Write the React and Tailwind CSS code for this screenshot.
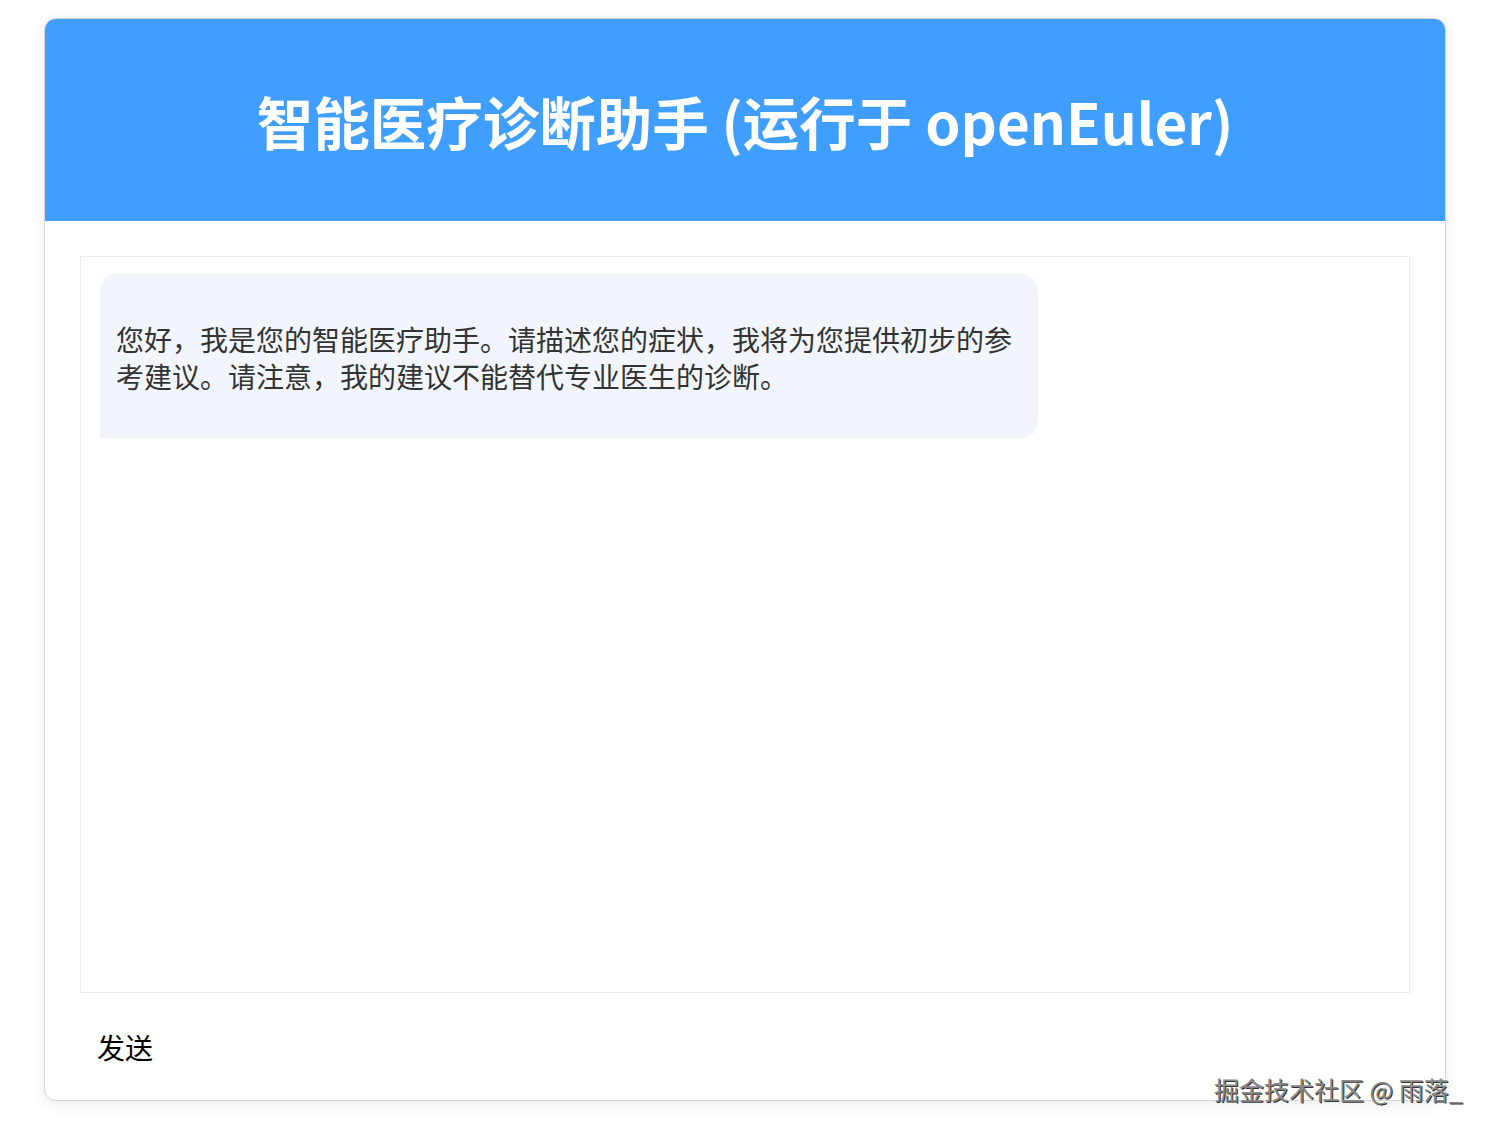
export default function App() {
  return (
    <div
      className="relative min-h-[1134px] bg-white pt-[18px] px-[44px]"
      style={{ fontFamily: '"Noto Sans CJK SC", "Noto Sans", sans-serif' }}
    >
      <div className="w-[1402px] h-[1083px] flex flex-col rounded-[12px] border border-[#d6d6d6] bg-white shadow-[0_4px_16px_rgba(0,0,0,0.08)] overflow-hidden">
        <header className="h-[202px] shrink-0 bg-[#409eff] flex items-center justify-center">
          <h1 className="text-[56.5px] font-bold text-white leading-none">
            智能医疗诊断助手 (运行于 openEuler)
          </h1>
        </header>

        <div className="px-[35px] pt-[35px]">
          <div className="h-[737px] border border-[#ececec] px-[19px] pt-[17px]">
            <div className="w-[938px] rounded-[16px] rounded-bl-none bg-[#f2f6fc] px-[16px] pt-[47px] pb-[43px] text-[28px] leading-[37px] text-[#333]">
              您好，我是您的智能医疗助手。请描述您的症状，我将为您提供初步的参考建议。请注意，我的建议不能替代专业医生的诊断。
            </div>
          </div>
        </div>

        <div className="px-[52px] pt-[36px]">
          <button className="text-[28px] leading-[37px] text-black">发送</button>
        </div>
      </div>

      <div className="absolute left-[1214px] top-[1073px] text-[25px] leading-[32px] text-[#8a8a8a] [text-shadow:1px_1px_0_#333,-1px_-1px_0_#fff]">
        掘金技术社区 @ 雨落_
      </div>
    </div>
  )
}
